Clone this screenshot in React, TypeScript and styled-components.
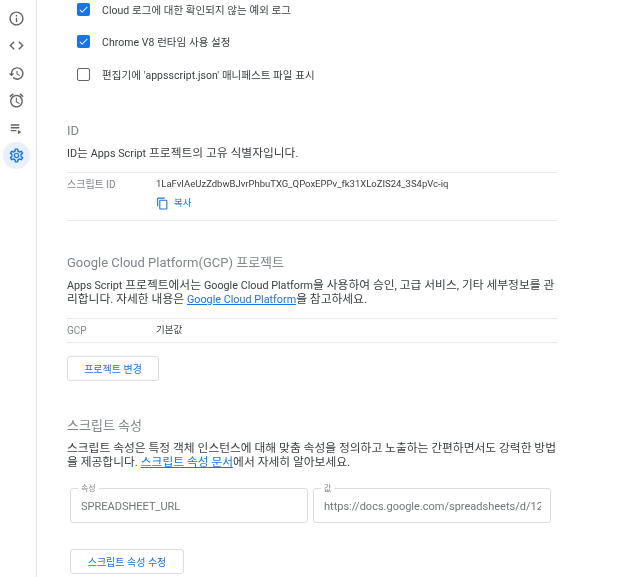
import React from 'react';
import styled, { createGlobalStyle } from 'styled-components';

const GlobalStyle = createGlobalStyle`
    html, body {
        margin: 0;
        padding: 0;
        background: #fff;
    }
    body {
        font-family: Roboto, 'Noto Sans CJK KR', sans-serif;
        color: #3c4043;
    }
`;

const Page = styled.div`
    display: flex;
    width: 640px;
    height: 577px;
    overflow: hidden;
    filter: blur(0.3px);
`;

const Sidebar = styled.nav`
    flex: none;
    box-sizing: border-box;
    width: 37px;
    height: 100%;
    padding: 5px 0 0 3px;
    border-right: 1px solid #e0e0e0;
    display: flex;
    flex-direction: column;
    align-items: flex-start;
    gap: 0.4px;
`;

const NavItem = styled.div<{ $active?: boolean }>`
    width: 27px;
    height: 27px;
    border-radius: 50%;
    display: flex;
    align-items: center;
    justify-content: center;
    color: ${p => (p.$active ? '#1a73e8' : '#5f6368')};
    background: ${p => (p.$active ? '#e8f0fe' : 'transparent')};
`;

const Main = styled.main`
    flex: none;
    box-sizing: border-box;
    width: 520px;
    padding: 0 0 0 30px;
`;

const Checks = styled.div`
    display: flex;
    flex-direction: column;
    gap: 18.6px;
    padding-left: 10px;
`;

const CheckRow = styled.div`
    display: flex;
    align-items: center;
    gap: 12px;
    height: 14px;
    font-size: 10.5px;
    letter-spacing: 0.05px;
    color: #3c4043;
    &:first-child {
        margin-top: 2px;
    }
`;

const Box = styled.span<{ $checked?: boolean }>`
    box-sizing: border-box;
    width: 13px;
    height: 13px;
    border-radius: 2px;
    display: flex;
    align-items: center;
    justify-content: center;
    color: #fff;
    background: ${p => (p.$checked ? '#1a73e8' : '#fff')};
    border: ${p => (p.$checked ? 'none' : '1.5px solid #5f6368')};
`;

const Section = styled.section<{ $top: number }>`
    margin-top: ${p => p.$top}px;
`;

const Heading = styled.h2`
    margin: 0;
    font-size: 13px;
    line-height: 16px;
    font-weight: 400;
    color: #80868b;
`;

const Paragraph = styled.p`
    margin: 7px 0 0;
    font-size: 11.75px;
    line-height: 14.5px;
    color: #3c4043;
`;

// latin runs sit a little smaller than the hangul around them
const Latin = styled.span`
    font-size: 10.8px;
    line-height: 1;
`;

const TextLink = styled.a`
    color: #1a73e8;
    text-decoration: underline;
`;

const InfoTable = styled.div<{ $top: number }>`
    margin-top: ${p => p.$top}px;
    border-top: 1px solid #e8eaed;
    border-bottom: 1px solid #e8eaed;
    display: grid;
    grid-template-columns: 89px 1fr;
    font-size: 9.5px;
`;

const InfoLabel = styled.div`
    color: #80868b;
    font-size: 10px;
    padding-top: 6px;
    line-height: 12px;
`;

const InfoValue = styled.div`
    color: #3c4043;
    padding: 5px 0 6px;
    line-height: 12px;
`;

const CopyLink = styled.div`
    display: flex;
    align-items: center;
    gap: 5px;
    margin-top: 7px;
    margin-bottom: 4px;
    color: #1a73e8;
    font-size: 9.5px;
`;

const OutlineButton = styled.button<{ $top: number; $width: number; $left?: number }>`
    display: block;
    box-sizing: border-box;
    margin: ${p => p.$top}px 0 0 ${p => p.$left ?? 0}px;
    width: ${p => p.$width}px;
    height: 25px;
    padding: 0;
    background: #fff;
    border: 1px solid #dadce0;
    border-radius: 3px;
    color: #1a73e8;
    font-family: inherit;
    font-size: 10px;
`;

const Fields = styled.div`
    display: flex;
    gap: 5px;
    margin: 14px 0 0 3px;
`;

const Field = styled.fieldset`
    box-sizing: border-box;
    width: 238px;
    height: 39px;
    margin: 0;
    padding: 0 9px 0 10px;
    border: 1px solid #dadce0;
    border-radius: 3px;
    min-inline-size: 0;
`;

const Legend = styled.legend`
    margin-left: -3px;
    padding: 0 3px;
    font-size: 8px;
    line-height: 10px;
    color: #80868b;
`;

const FieldInput = styled.input`
    display: block;
    box-sizing: border-box;
    width: 100%;
    height: 26px;
    padding: 0;
    border: none;
    outline: none;
    background: transparent;
    font-family: inherit;
    font-size: 11px;
    color: #70757a;
`;

const Icon: React.FC<{ d: string; size?: number }> = ({ d, size = 17 }) => (
    <svg width={size} height={size} viewBox='0 0 24 24' fill='currentColor'>
        <path d={d} />
    </svg>
);

const ICONS = [
    'M11 7h2v2h-2zm0 4h2v6h-2zm1-9C6.48 2 2 6.48 2 12s4.48 10 10 10 10-4.48 10-10S17.52 2 12 2zm0 18c-4.41 0-8-3.59-8-8s3.59-8 8-8 8 3.59 8 8-3.59 8-8 8z',
    'M9.4 16.6L4.8 12l4.6-4.6L8 6l-6 6 6 6 1.4-1.4zm5.2 0l4.6-4.6-4.6-4.6L16 6l6 6-6 6-1.4-1.4z',
    'M13 3c-4.97 0-9 4.03-9 9H1l3.89 3.89.07.14L9 12H6c0-3.87 3.13-7 7-7s7 3.13 7 7-3.13 7-7 7c-1.93 0-3.68-.79-4.94-2.06l-1.42 1.42C8.27 19.99 10.51 21 13 21c4.97 0 9-4.03 9-9s-4.03-9-9-9zm-1 5v5l4.28 2.54.72-1.21-3.5-2.08V8H12z',
    'M22 5.72l-4.6-3.86-1.29 1.53 4.6 3.86L22 5.72zM7.88 3.39L6.6 1.86 2 5.71l1.29 1.53 4.59-3.85zM12.5 8H11v6l4.75 2.85.75-1.23-4-2.37V8zM12 4c-4.97 0-9 4.03-9 9s4.02 9 9 9c4.97 0 9-4.03 9-9s-4.03-9-9-9zm0 16c-3.87 0-7-3.13-7-7s3.13-7 7-7 7 3.13 7 7-3.13 7-7 7z',
    'M4 10h12v2H4zm0-4h12v2H4zm0 8h8v2H4zm10 0v6l5-3z',
    'M19.43 12.98c.04-.32.07-.64.07-.98 0-.34-.03-.66-.07-.98l2.11-1.65c.19-.15.24-.42.12-.64l-2-3.46c-.09-.16-.26-.25-.44-.25-.06 0-.12.01-.17.03l-2.49 1c-.52-.4-1.08-.73-1.69-.98l-.38-2.65C14.46 2.18 14.25 2 14 2h-4c-.25 0-.46.18-.49.42l-.38 2.65c-.61.25-1.17.59-1.69.98l-2.49-1c-.06-.02-.12-.03-.18-.03-.17 0-.34.09-.43.25l-2 3.46c-.13.22-.07.49.12.64l2.11 1.65c-.04.32-.07.65-.07.98 0 .33.03.66.07.98l-2.11 1.65c-.19.15-.24.42-.12.64l2 3.46c.09.16.26.25.44.25.06 0 .12-.01.17-.03l2.49-1c.52.4 1.08.73 1.69.98l.38 2.65c.03.24.24.42.49.42h4c.25 0 .46-.18.49-.42l.38-2.65c.61-.25 1.17-.59 1.69-.98l2.49 1c.06.02.12.03.18.03.17 0 .34-.09.43-.25l2-3.46c.12-.22.07-.49-.12-.64l-2.11-1.65zm-1.98-1.71c.04.31.05.52.05.73 0 .21-.02.43-.05.73l-.14 1.13.89.7 1.08.84-.7 1.21-1.27-.51-1.04-.42-.9.68c-.43.32-.84.56-1.25.73l-1.06.43-.16 1.13-.2 1.35h-1.4l-.19-1.35-.16-1.13-1.06-.43c-.43-.18-.83-.41-1.23-.71l-.91-.7-1.06.43-1.27.51-.7-1.21 1.08-.84.89-.7-.14-1.13c-.03-.31-.05-.54-.05-.74s.02-.43.05-.73l.14-1.13-.89-.7-1.08-.84.7-1.21 1.27.51 1.04.42.9-.68c.43-.32.84-.56 1.25-.73l1.06-.43.16-1.13.2-1.35h1.39l.19 1.35.16 1.13 1.06.43c.43.18.83.41 1.23.71l.91.7 1.06-.43 1.27-.51.7 1.21-1.07.85-.89.7.14 1.13zM12 8c-2.21 0-4 1.79-4 4s1.79 4 4 4 4-1.79 4-4-1.79-4-4-4zm0 6c-1.1 0-2-.9-2-2s.9-2 2-2 2 .9 2 2-.9 2-2 2z',
];

const COPY_ICON =
    'M16 1H4c-1.1 0-2 .9-2 2v14h2V3h12V1zm3 4H8c-1.1 0-2 .9-2 2v14c0 1.1.9 2 2 2h11c1.1 0 2-.9 2-2V7c0-1.1-.9-2-2-2zm0 16H8V7h11v14z';
const CHECK_ICON = 'M9 16.17L4.83 12l-1.42 1.41L9 19 21 7l-1.41-1.41z';

const OPTIONS = [
    { label: 'Cloud 로그에 대한 확인되지 않는 예외 로그', checked: true },
    { label: 'Chrome V8 런타임 사용 설정', checked: true },
    { label: "편집기에 'appsscript.json' 매니페스트 파일 표시", checked: false },
];

export default function App() {
    return (
        <Page>
            <GlobalStyle />
            <Sidebar>
                {ICONS.map((d, i) => (
                    <NavItem key={i} $active={i === ICONS.length - 1}>
                        <Icon d={d} />
                    </NavItem>
                ))}
            </Sidebar>
            <Main>
                <Checks>
                    {OPTIONS.map(o => (
                        <CheckRow key={o.label}>
                            <Box $checked={o.checked}>
                                {o.checked && <Icon d={CHECK_ICON} size={11} />}
                            </Box>
                            {o.label}
                        </CheckRow>
                    ))}
                </Checks>

                <Section $top={42}>
                    <Heading>ID</Heading>
                    <Paragraph>
                        <Latin>ID</Latin>는 <Latin>Apps Script</Latin> 프로젝트의 고유 식별자입니다.
                    </Paragraph>
                    <InfoTable $top={11}>
                        <InfoLabel>스크립트 ID</InfoLabel>
                        <InfoValue>
                            1LaFvIAeUzZdbwBJvrPhbuTXG_QPoxEPPv_fk31XLoZIS24_3S4pVc-iq
                            <CopyLink>
                                <Icon d={COPY_ICON} size={13} />
                                복사
                            </CopyLink>
                        </InfoValue>
                    </InfoTable>
                </Section>

                <Section $top={34}>
                    <Heading>Google Cloud Platform(GCP) 프로젝트</Heading>
                    <Paragraph>
                        <Latin>Apps Script</Latin> 프로젝트에서는 <Latin>Google Cloud Platform</Latin>을
                        사용하여 승인, 고급 서비스, 기타 세부정보를 관리합니다. 자세한 내용은{' '}
                        <TextLink>
                            <Latin>Google Cloud Platform</Latin>
                        </TextLink>
                        을 참고하세요.
                    </Paragraph>
                    <InfoTable $top={11}>
                        <InfoLabel>GCP</InfoLabel>
                        <InfoValue>기본값</InfoValue>
                    </InfoTable>
                    <OutlineButton $top={13} $width={92}>
                        프로젝트 변경
                    </OutlineButton>
                </Section>

                <Section $top={37}>
                    <Heading>스크립트 속성</Heading>
                    <Paragraph>
                        스크립트 속성은 특정 객체 인스턴스에 대해 맞춤 속성을 정의하고 노출하는 간편하면서도
                        강력한 방법을 제공합니다. <TextLink>스크립트 속성 문서</TextLink>에서 자세히
                        알아보세요.
                    </Paragraph>
                    <Fields>
                        <Field>
                            <Legend>속성</Legend>
                            <FieldInput readOnly value='SPREADSHEET_URL' />
                        </Field>
                        <Field>
                            <Legend>값</Legend>
                            <FieldInput
                                readOnly
                                value='https://docs.google.com/spreadsheets/d/12aBcDeFgHiJkLmNoPqRsTuVwXyZ/edit'
                            />
                        </Field>
                    </Fields>
                    <OutlineButton $top={26} $width={114} $left={3}>
                        스크립트 속성 수정
                    </OutlineButton>
                </Section>
            </Main>
        </Page>
    );
}
